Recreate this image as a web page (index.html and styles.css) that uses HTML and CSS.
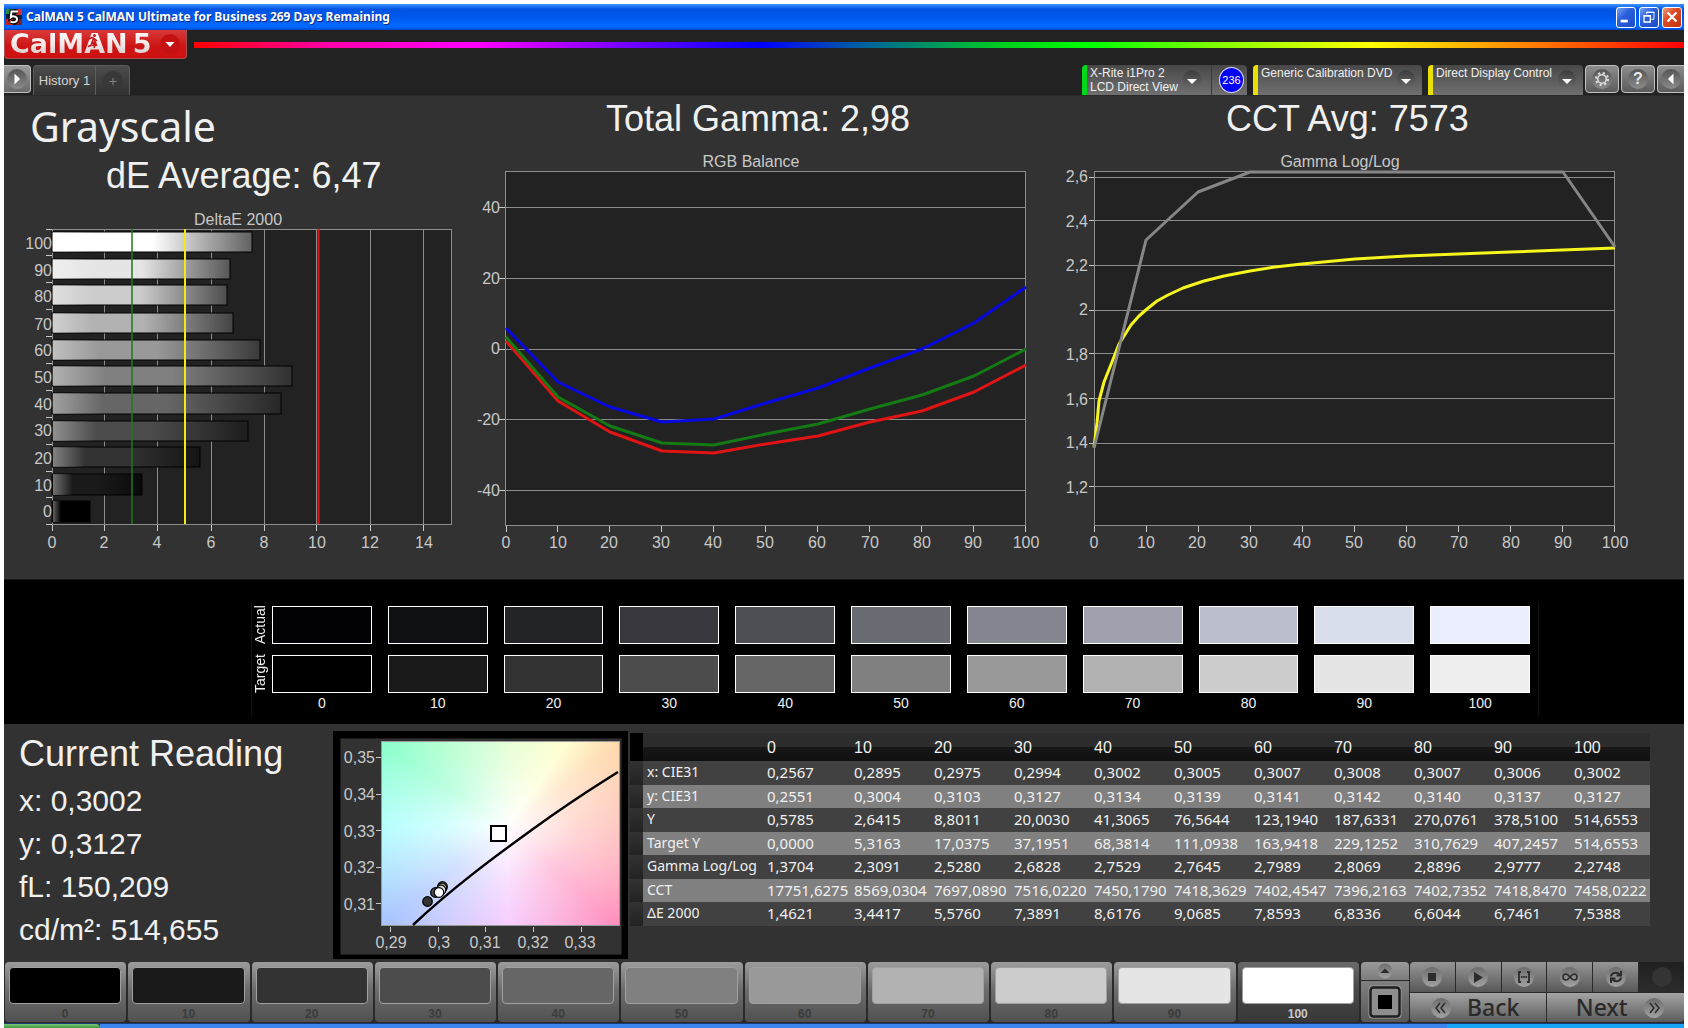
FILE: index.html
```html
<!DOCTYPE html>
<html lang="en">
<head>
<meta charset="utf-8">
<title>CalMAN 5</title>
<link rel="stylesheet" href="styles.css">
</head>
<body>
<div class="window">
  <header class="titlebar">
    <svg class="app-icon" viewBox="0 0 16 16" aria-hidden="true">
      <rect width="16" height="16" fill="#123"/><rect width="8" height="5" fill="#2a8a3a"/><rect x="10" width="6" height="6" fill="#c33"/><rect y="10" width="7" height="6" fill="#c22"/><rect x="10" y="10" width="6" height="6" fill="#722"/>
      <path d="M12 2.500H5.500L4.800 8.200C6.500 6.800 11 7 11 10.200 11 13.400 6.800 14 4.500 12.500" fill="none" stroke="#000" stroke-width="4"/>
      <path d="M12 2.500H5.500L4.800 8.200C6.500 6.800 11 7 11 10.200 11 13.400 6.800 14 4.500 12.500" fill="none" stroke="#fff" stroke-width="2"/>
    </svg>
    <h1 class="titlebar-text">CalMAN 5 CalMAN Ultimate for Business 269 Days Remaining</h1>
    <div class="window-buttons">
      <button class="win-btn" aria-label="Minimize"><svg viewBox="0 0 20 20"><rect x="4" y="13" width="8" height="3" fill="#fff"/></svg></button>
      <button class="win-btn" aria-label="Restore"><svg viewBox="0 0 20 20" fill="none" stroke="#fff"><path d="M7.500 7V4.500H15.500V12.500H12.500M7 5H16"/><path d="M4.500 8.500H11.500V15.500H4.500zM4 9H12" stroke-width="1.500"/></svg></button>
      <button class="win-btn win-close" aria-label="Close"><svg viewBox="0 0 20 20"><path d="M5 5L15 15M15 5L5 15" stroke="#fff" stroke-width="2.400"/></svg></button>
    </div>
  </header>

  <div class="toolbar">
    <div class="brand-row">
      <button class="brand" aria-label="CalMAN 5 menu">
        <span class="brand-name">CalMAN</span><span class="brand-name brand-five">5</span>
        <svg class="brand-runner" viewBox="0 0 12 16" fill="none" stroke="#c01a1a" stroke-width="1.600"><circle cx="7.500" cy="2.500" r="1.500" fill="#c01a1a" stroke="none"/><path d="M2 6L5 4.500L7.500 6L10 8M6.500 5.500L5 9.500L8 11.500L7 15M5 9.500L4 12.500L1 13.500"/></svg>
        <svg class="disc" viewBox="0 0 20 20"><circle cx="10" cy="10" r="10" fill="#c41212"/><path d="M5.500 8H14.500L10 13z" fill="#fff"/></svg>
      </button>
      <div class="spectrum"></div>
    </div>
    <div class="tab-row">
      <button class="side-btn side-left" aria-label="Expand panel"><svg class="disc" viewBox="0 0 20 20"><circle cx="10" cy="10" r="10" fill="url(#discFill)"/><path d="M7.500 4.500L13 10L7.500 15.500z" fill="#fff"/></svg></button>
      <nav class="tabs">
        <button class="tab">History 1</button>
        <button class="tab tab-add" aria-label="Add tab"><svg class="disc" viewBox="0 0 20 20"><circle cx="10" cy="10" r="10" fill="#383838"/><path d="M6.500 10.500H13.500M10 7V14" stroke="#858585" stroke-width="1"/></svg></button>
      </nav>
      <div class="devices">
        <div class="device device-meter">
          <button class="device-main">X-Rite i1Pro 2<br>LCD Direct View</button>
          <svg class="device-arrow" viewBox="0 0 18 20"><ellipse cx="9" cy="10" rx="9" ry="10" fill="url(#discDark)"/><path d="M4 9H14L9 14z" fill="#fff"/></svg>
          <button class="meter-count">236</button>
        </div>
        <div class="device device-source">
          <select class="device-main" aria-label="Pattern source"><option>Generic Calibration DVD</option></select>
          <svg class="device-arrow" viewBox="0 0 18 20"><ellipse cx="9" cy="10" rx="9" ry="10" fill="url(#discDark)"/><path d="M4 9H14L9 14z" fill="#fff"/></svg>
        </div>
        <div class="device device-display">
          <select class="device-main" aria-label="Display control"><option>Direct Display Control</option></select>
          <svg class="device-arrow" viewBox="0 0 18 20"><ellipse cx="9" cy="10" rx="9" ry="10" fill="url(#discDark)"/><path d="M4 9H14L9 14z" fill="#fff"/></svg>
        </div>
        <button class="side-btn" aria-label="Settings"><svg class="disc" viewBox="0 0 20 20"><circle cx="10" cy="10" r="10" fill="url(#discFill)"/><circle cx="10" cy="10" r="4.300" fill="none" stroke="#ddd" stroke-width="1.600"/><circle cx="10" cy="10" r="6" fill="none" stroke="#ddd" stroke-width="2" stroke-dasharray="2.200 2.512"/></svg></button>
        <button class="side-btn" aria-label="Help"><span class="help-mark">?</span></button>
        <button class="side-btn side-right" aria-label="Collapse panel"><svg class="disc" viewBox="0 0 20 20"><circle cx="10" cy="10" r="10" fill="url(#discFill)"/><path d="M12.500 4.500L7 10L12.500 15.500z" fill="#fff"/></svg></button>
      </div>
    </div>
  </div>

  <main>
    <section class="charts">
      <div class="chart-col">
        <h2 class="page-title">Grayscale</h2>
        <p class="stat-de">dE Average: 6,47</p>
        <svg class="chart" viewBox="0 0 466 383" role="img" aria-label="DeltaE 2000">
          <defs>
            <linearGradient id="discFill" x2="0" y2="1"><stop stop-color="#555"/><stop offset="1" stop-color="#8c8c8c"/></linearGradient>
            <linearGradient id="discDark" x2="0" y2="1"><stop stop-color="#3c3c3c"/><stop offset="1" stop-color="#6c6c6c"/></linearGradient>
            <linearGradient id="discLight" x2="0" y2="1"><stop stop-color="#6c6c6c"/><stop offset="1" stop-color="#a2a2a2"/></linearGradient>
            <linearGradient id="sheen"><stop stop-color="#fff" stop-opacity=".38"/><stop offset=".22" stop-color="#fff" stop-opacity="0"/><stop offset=".5" stop-color="#000" stop-opacity="0"/><stop offset="1" stop-color="#000" stop-opacity=".62"/></linearGradient>
          </defs>
          <text class="ctitle" x="234" y="29">DeltaE 2000</text>
          <rect class="plot" x="48.500" y="33.500" width="399" height="295"/>
          <path class="grid" d="M100.500 34V328M153.500 34V328M207.500 34V328M260.500 34V328M312.500 34V328M366.500 34V328M419.500 34V328"/>
          <path class="tick" d="M42 33.500h6M42 59.500h6M42 86.500h6M42 113.500h6M42 140.500h6M42 167.500h6M42 194.500h6M42 221.500h6M42 248.500h6M42 275.500h6M42 301.500h6M42 328.500h6M48.500 329v6M100.500 329v6M153.500 329v6M207.500 329v6M260.500 329v6M312.500 329v6M366.500 329v6M419.500 329v6"/>
          <g class="bars">
            <rect x="48" y="36" width="200" height="20" fill="#fff"/><rect x="48" y="63" width="178" height="20" fill="#e5e5e5"/><rect x="48" y="89" width="175" height="20" fill="#ccc"/><rect x="48" y="117" width="181" height="20" fill="#b2b2b2"/><rect x="48" y="144" width="208" height="20" fill="#999"/><rect x="48" y="170" width="240" height="20" fill="#808080"/><rect x="48" y="197" width="229" height="21" fill="#666"/><rect x="48" y="225" width="196" height="20" fill="#4c4c4c"/><rect x="48" y="251" width="148" height="20" fill="#333"/><rect x="48" y="278" width="90" height="21" fill="#1a1a1a"/><rect x="48" y="305" width="38" height="21" fill="#000"/>
          </g>
          <g fill="url(#sheen)">
            <rect x="49" y="36" width="199" height="20"/><rect x="49" y="63" width="177" height="20"/><rect x="49" y="89" width="174" height="20"/><rect x="49" y="117" width="180" height="20"/><rect x="49" y="144" width="207" height="20"/><rect x="49" y="170" width="239" height="20"/><rect x="49" y="197" width="228" height="21"/><rect x="49" y="225" width="195" height="20"/><rect x="49" y="251" width="147" height="20"/><rect x="49" y="278" width="89" height="21"/><rect x="49" y="305" width="37" height="21"/>
          </g>
          <path d="M128 33V328" stroke="#1a7a20" stroke-width="2" opacity=".75"/>
          <path d="M181 33V328" stroke="#f0e818" stroke-width="2"/>
          <path d="M314.500 33V328" stroke="#d81818" stroke-width="2"/>
          <g class="ylab"><text x="48" y="53">100</text><text x="48" y="80">90</text><text x="48" y="106">80</text><text x="48" y="134">70</text><text x="48" y="160">60</text><text x="48" y="187">50</text><text x="48" y="214">40</text><text x="48" y="240">30</text><text x="48" y="268">20</text><text x="48" y="295">10</text><text x="48" y="321">0</text></g>
          <g class="xlab"><text x="48" y="352">0</text><text x="100" y="352">2</text><text x="153" y="352">4</text><text x="207" y="352">6</text><text x="260" y="352">8</text><text x="313" y="352">10</text><text x="366" y="352">12</text><text x="420" y="352">14</text></g>
        </svg>
      </div>
      <div class="chart-col">
        <p class="stat stat-gamma">Total Gamma: 2,98</p>
        <svg class="chart" viewBox="0 0 585 441" role="img" aria-label="RGB Balance">
          <text class="ctitle" x="281" y="29">RGB Balance</text>
          <rect class="plot" x="35.500" y="33.500" width="520" height="354"/>
          <path class="grid" d="M36 69.500H556M36 140.500H556M36 211.500H556M36 281.500H556M36 352.500H556"/>
          <path class="tick" d="M29 69.500h6M29 140.500h6M29 211.500h6M29 281.500h6M29 352.500h6M36.500 388v6M87.500 388v6M139.500 388v6M191.500 388v6M243.500 388v6M295.500 388v6M347.500 388v6M399.500 388v6M451.500 388v6M503.500 388v6M555.500 388v6"/>
          <polyline class="line" stroke="#e01414" points="36,203 88,263 140,294 192,313 244,315 296,306 348,298 400,284 452,273 504,254 556,227"/>
          <polyline class="line" stroke="#147a14" points="36,199 88,259 140,288 192,305 244,307 296,296 348,286 400,271 452,257 504,238 556,211"/>
          <polyline class="line" stroke="#0808e0" points="36,190 88,244 140,269 192,284 244,281 296,265 348,250 400,230 452,211 504,185 556,149"/>
          <g class="ylab"><text x="30" y="75">40</text><text x="30" y="146">20</text><text x="30" y="216">0</text><text x="30" y="287">-20</text><text x="30" y="358">-40</text></g>
          <g class="xlab"><text x="36" y="410">0</text><text x="88" y="410">10</text><text x="139" y="410">20</text><text x="191" y="410">30</text><text x="243" y="410">40</text><text x="295" y="410">50</text><text x="347" y="410">60</text><text x="400" y="410">70</text><text x="452" y="410">80</text><text x="503" y="410">90</text><text x="556" y="410">100</text></g>
        </svg>
      </div>
      <div class="chart-col">
        <p class="stat stat-cct">CCT Avg: 7573</p>
        <svg class="chart" viewBox="0 0 629 441" role="img" aria-label="Gamma Log/Log">
          <text class="ctitle" x="285" y="29">Gamma Log/Log</text>
          <rect class="plot" x="39.500" y="33.500" width="520" height="354"/>
          <path class="grid" d="M40 39.500H560M40 82.500H560M40 127.500H560M40 172.500H560M40 215.500H560M40 260.500H560M40 305.500H560M40 348.500H560"/>
          <path class="tick" d="M34 39.500h5M34 82.500h5M34 127.500h5M34 172.500h5M34 215.500h5M34 260.500h5M34 305.500h5M34 348.500h5M39.500 388v6M91.500 388v6M143.500 388v6M195.500 388v6M247.500 388v6M299.500 388v6M351.500 388v6M403.500 388v6M455.500 388v6M507.500 388v6M559.500 388v6"/>
          <polyline class="line" stroke="#f6f61e" points="39,309 42,285 44,263 49,244 57,224 64,206 76,187 84,178 92,171 102,163 113,157 128,150 149,143 169,138 195,133 220,129 247,126 300,121 351,118 403,116 455,114 507,112 560,110"/>
          <polyline class="line" stroke="#868686" points="39,310 91,102 143,54 195,34 508,34 560,109"/>
          <g class="ylab"><text x="33" y="44">2,6</text><text x="33" y="89">2,4</text><text x="33" y="133">2,2</text><text x="33" y="177">2</text><text x="33" y="222">1,8</text><text x="33" y="267">1,6</text><text x="33" y="310">1,4</text><text x="33" y="355">1,2</text></g>
          <g class="xlab"><text x="39" y="410">0</text><text x="91" y="410">10</text><text x="142" y="410">20</text><text x="194" y="410">30</text><text x="247" y="410">40</text><text x="299" y="410">50</text><text x="352" y="410">60</text><text x="404" y="410">70</text><text x="456" y="410">80</text><text x="508" y="410">90</text><text x="560" y="410">100</text></g>
        </svg>
      </div>
    </section>

    <section class="strip">
      <div class="strip-inner">
        <div class="strip-row">
          <span class="strip-label">Actual</span>
          <div class="swatches">
            <i class="swatch a0"></i><i class="swatch a10"></i><i class="swatch a20"></i><i class="swatch a30"></i><i class="swatch a40"></i><i class="swatch a50"></i><i class="swatch a60"></i><i class="swatch a70"></i><i class="swatch a80"></i><i class="swatch a90"></i><i class="swatch a100"></i>
          </div>
        </div>
        <div class="strip-row">
          <span class="strip-label">Target</span>
          <div class="swatches">
            <i class="swatch t0"></i><i class="swatch t10"></i><i class="swatch t20"></i><i class="swatch t30"></i><i class="swatch t40"></i><i class="swatch t50"></i><i class="swatch t60"></i><i class="swatch t70"></i><i class="swatch t80"></i><i class="swatch t90"></i><i class="swatch t100"></i>
          </div>
        </div>
        <div class="strip-numbers swatches">
          <span>0</span><span>10</span><span>20</span><span>30</span><span>40</span><span>50</span><span>60</span><span>70</span><span>80</span><span>90</span><span>100</span>
        </div>
      </div>
    </section>

    <section class="lower">
      <div class="reading">
        <h2 class="reading-title">Current Reading</h2>
        <p>x: 0,3002</p>
        <p>y: 0,3127</p>
        <p>fL: 150,209</p>
        <p>cd/m²: 514,655</p>
      </div>
      <svg class="cie" viewBox="0 0 295 228" role="img" aria-label="CIE chromaticity">
        <rect width="295" height="228" fill="#000"/>
        <rect x="7.500" y="7.500" width="281" height="216" fill="#323232" stroke="#1c1c1c"/>
        <foreignObject x="49" y="11" width="237" height="184"><div class="gamut"></div></foreignObject>
        <rect x="48.500" y="10.500" width="238" height="184" fill="none" stroke="#9a9a9a"/>
        <path d="M80 194C118 158 160 127 200 98S255 60 285 41" fill="none" stroke="#000" stroke-width="2.500"/>
        <rect x="158" y="95" width="15" height="15" fill="#fff" stroke="#000" stroke-width="2"/>
        <g stroke="#000" stroke-width="1.200">
          <circle cx="94.500" cy="170.500" r="4.800" fill="#333"/><circle cx="102.500" cy="161.500" r="4.800" fill="#4c4c4c"/><circle cx="109.500" cy="155.500" r="4.800" fill="#888"/><circle cx="109" cy="157" r="4.800" fill="#b2b2b2"/><circle cx="108" cy="159" r="4.800" fill="#ddd"/><circle cx="106" cy="161.500" r="4.800" fill="#fff"/>
        </g>
        <path class="tick" d="M43 26.500h5M43 63.500h5M43 99.500h5M43 136.500h5M43 172.500h5M57.500 196v5M105.500 196v5M152.500 196v5M200.500 196v5M248.500 196v5"/>
        <g class="ylab"><text x="42" y="32">0,35</text><text x="42" y="69">0,34</text><text x="42" y="106">0,33</text><text x="42" y="142">0,32</text><text x="42" y="179">0,31</text></g>
        <g class="xlab"><text x="58" y="217">0,29</text><text x="106" y="217">0,3</text><text x="152" y="217">0,31</text><text x="200" y="217">0,32</text><text x="247" y="217">0,33</text></g>
      </svg>
      <div class="table-wrap">
        <table class="data">
          <colgroup><col class="c-side"><col class="c-name"><col class="c-first"><col span="10" class="c-val"></colgroup>
          <thead><tr><td class="side"></td><td></td><th scope="col">0</th><th scope="col">10</th><th scope="col">20</th><th scope="col">30</th><th scope="col">40</th><th scope="col">50</th><th scope="col">60</th><th scope="col">70</th><th scope="col">80</th><th scope="col">90</th><th scope="col">100</th></tr></thead>
          <tbody>
            <tr><td class="side"></td><th scope="row">x: CIE31</th><td>0,2567</td><td>0,2895</td><td>0,2975</td><td>0,2994</td><td>0,3002</td><td>0,3005</td><td>0,3007</td><td>0,3008</td><td>0,3007</td><td>0,3006</td><td>0,3002</td></tr>
            <tr><td class="side"></td><th scope="row">y: CIE31</th><td>0,2551</td><td>0,3004</td><td>0,3103</td><td>0,3127</td><td>0,3134</td><td>0,3139</td><td>0,3141</td><td>0,3142</td><td>0,3140</td><td>0,3137</td><td>0,3127</td></tr>
            <tr><td class="side"></td><th scope="row">Y</th><td>0,5785</td><td>2,6415</td><td>8,8011</td><td>20,0030</td><td>41,3065</td><td>76,5644</td><td>123,1940</td><td>187,6331</td><td>270,0761</td><td>378,5100</td><td>514,6553</td></tr>
            <tr><td class="side"></td><th scope="row">Target Y</th><td>0,0000</td><td>5,3163</td><td>17,0375</td><td>37,1951</td><td>68,3814</td><td>111,0938</td><td>163,9418</td><td>229,1252</td><td>310,7629</td><td>407,2457</td><td>514,6553</td></tr>
            <tr><td class="side"></td><th scope="row">Gamma Log/Log</th><td>1,3704</td><td>2,3091</td><td>2,5280</td><td>2,6828</td><td>2,7529</td><td>2,7645</td><td>2,7989</td><td>2,8069</td><td>2,8896</td><td>2,9777</td><td>2,2748</td></tr>
            <tr><td class="side"></td><th scope="row">CCT</th><td>17751,6275</td><td>8569,0304</td><td>7697,0890</td><td>7516,0220</td><td>7450,1790</td><td>7418,3629</td><td>7402,4547</td><td>7396,2163</td><td>7402,7352</td><td>7418,8470</td><td>7458,0222</td></tr>
            <tr><td class="side"></td><th scope="row">ΔE 2000</th><td>1,4621</td><td>3,4417</td><td>5,5760</td><td>7,3891</td><td>8,6176</td><td>9,0685</td><td>7,8593</td><td>6,8336</td><td>6,6044</td><td>6,7461</td><td>7,5388</td></tr>
          </tbody>
        </table>
      </div>
    </section>
  </main>

  <footer class="controls">
    <div class="steps">
      <button class="step"><i class="t0"></i>0</button><button class="step"><i class="t10"></i>10</button><button class="step"><i class="t20"></i>20</button><button class="step"><i class="t30"></i>30</button><button class="step"><i class="t40"></i>40</button><button class="step"><i class="t50"></i>50</button><button class="step"><i class="t60"></i>60</button><button class="step"><i class="t70"></i>70</button><button class="step"><i class="t80"></i>80</button><button class="step"><i class="t90"></i>90</button><button class="step step-on"><i class="white"></i>100</button>
    </div>
    <div class="pattern">
      <button class="pattern-up" aria-label="Pattern menu"><svg viewBox="0 0 16 16"><circle cx="8" cy="8" r="7.500" fill="url(#discLight)"/><path d="M3.500 10L8 5.500L12.500 10z" fill="#2c2c2c"/></svg></button>
      <button class="pattern-window" aria-label="Pattern window"><svg viewBox="0 0 34 34"><rect x="1" y="1" width="32" height="32" rx="3" fill="#777" stroke="#9a9a9a"/><rect x="2.500" y="2.500" width="29" height="29" rx="3" fill="#8e8e8e" stroke="#202020" stroke-width="2.500"/><rect x="10" y="10" width="14" height="14" fill="#000"/></svg></button>
    </div>
    <div class="transport">
      <button class="t-btn" aria-label="Stop"><svg viewBox="0 0 20 20"><circle cx="10" cy="10" r="10" fill="url(#discLight)"/><rect x="6" y="6" width="8" height="8" fill="#2c2c2c"/></svg></button>
      <button class="t-btn" aria-label="Play"><svg viewBox="0 0 20 20"><circle cx="10" cy="10" r="10" fill="url(#discLight)"/><path d="M6 5L15 10.500L6 16z" fill="#2c2c2c"/></svg></button>
      <button class="t-btn" aria-label="Read series"><svg viewBox="0 0 20 20" fill="none" stroke="#2c2c2c" stroke-width="1.800"><circle cx="10" cy="10" r="10" fill="url(#discLight)" stroke="none"/><path d="M7 5H5V15H7M13 5H15V15H13M7 10h1.500M9.200 10h1.500M11.500 10h1.500"/></svg></button>
      <button class="t-btn" aria-label="Read continuous"><svg viewBox="0 0 20 20" fill="none" stroke="#2c2c2c" stroke-width="1.600"><circle cx="10" cy="10" r="10" fill="url(#discLight)" stroke="none"/><path d="M10 10C8 7.500 7 7 6 7A3 3 0 0 0 6 13C7 13 8 12.500 10 10S13 7 14 7A3 3 0 0 1 14 13C13 13 12 12.500 10 10z"/></svg></button>
      <button class="t-btn" aria-label="Repeat"><svg viewBox="0 0 20 20" fill="none" stroke="#2c2c2c" stroke-width="2"><circle cx="10" cy="10" r="10" fill="url(#discLight)" stroke="none"/><path d="M5 9.500C5.500 5.500 11 4.500 13.500 7.500M15 10.500C14.500 14.500 9 15.500 6.500 12.500M15 4V8.500H10.500M5 16V11.500H9.500"/></svg></button>
      <button class="t-btn t-off" aria-label="Record"><svg viewBox="0 0 20 20"><circle cx="10" cy="10" r="10" fill="#343434"/></svg></button>
      <button class="nav-btn"><svg viewBox="0 0 20 20" fill="none" stroke="#2c2c2c" stroke-width="1.500"><circle cx="10" cy="10" r="10" fill="url(#discLight)" stroke="none"/><path d="M9 5L5 10L9 15M14 5L10 10L14 15"/></svg>Back</button>
      <button class="nav-btn">Next<svg viewBox="0 0 20 20" fill="none" stroke="#2c2c2c" stroke-width="1.500"><circle cx="10" cy="10" r="10" fill="url(#discLight)" stroke="none"/><path d="M6 5L10 10L6 15M11 5L15 10L11 15"/></svg></button>
    </div>
  </footer>
  <div class="taskbar"><i class="start"></i><i class="tasks"></i><i class="tray"></i></div>
</div>
</body>
</html>
```
FILE: styles.css
```css
* { box-sizing: border-box; }
body { margin: 0; background: #fff; font-family: "Liberation Sans", Arial, sans-serif; color: #f0f0f0; }
h1, h2, p { margin: 0; font-weight: 400; }
button, select { margin: 0; padding: 0; border: 0; background: none; color: inherit; font: inherit; }
svg { display: block; }
.window { margin: 4px 4px 0; background: #323232; }

/* title bar */
.titlebar { display: flex; align-items: center; height: 26px; padding: 0 2px; background: linear-gradient(#3d95ff, #0054e3 20%, #0058ee 50%, #0068ff 80%, #0066fa 92%, #003ec0); }
.app-icon { width: 16px; height: 16px; }
.titlebar-text { flex: 1; padding-left: 4px; font: 700 12px/20px "Noto Sans", sans-serif; color: #fff; text-shadow: 1px 1px 0 #0a2a80; }
.window-buttons { display: flex; gap: 3px; }
.win-btn { width: 20px; height: 21px; border: 1px solid #fff; border-radius: 3px; background: linear-gradient(135deg, #7aa4f4, #2a5fdc 40%, #1c4cc8); }
.win-close { background: linear-gradient(135deg, #f0a080, #dc4a24 40%, #c03410); }

/* toolbar */
.toolbar { background: #222; padding-bottom: 1px; }
.brand-row { display: flex; align-items: flex-start; height: 35px; gap: 7px; }
.brand { position: relative; display: flex; align-items: center; width: 183px; height: 29px; padding: 0 7px 0 5px; border: 1px solid #a85050; border-top: 0; border-radius: 0 0 4px 4px; background: linear-gradient(#d83a3a, #cc1414 60%, #d01010); }
.brand-name { font: 700 27px/32px "DejaVu Sans", sans-serif; background: linear-gradient(#fff, #f4e8e8 50%, #c8c0c0); -webkit-background-clip: text; background-clip: text; color: transparent; }
.brand-five { padding: 0 9px 0 5px; }
.brand-runner { position: absolute; left: 82px; top: 3px; width: 12px; height: 16px; }
.disc { width: 20px; height: 20px; flex: none; }
.spectrum { flex: 1; height: 6px; margin-top: 12px; background: linear-gradient(90deg, #f00 0, #f0a 9%, #f0f 19%, #60f 30%, #00f 38%, #05a 44%, #0c2 54%, #0f0 60%, #8f0 69%, #ff0 79%, #f80 89%, #f00 100%); }
.tab-row { display: flex; height: 30px; }
.side-btn { display: grid; place-items: center; width: 34px; height: 28px; border: 1px solid #c0c0c0; border-radius: 4px; background: linear-gradient(#8c8c8c, #5c5c5c); }
.side-left { width: 27px; border-left: 0; border-radius: 0 4px 4px 0; background: linear-gradient(#9a9a9a, #6c6c6c); }
.side-right { width: 27px; border-right: 0; border-radius: 4px 0 0 4px; }
.tabs { display: flex; margin-left: 2px; border: 1px solid #5c5c5c; border-bottom: 0; border-radius: 4px 4px 0 0; background: linear-gradient(#4c4c4c, #323232); }
.tab { width: 61px; font-size: 13px; color: #d4d4d4; white-space: nowrap; }
.tab-add { display: grid; place-items: center; width: 34px; border-left: 1px solid #5c5c5c; }
.devices { display: flex; gap: 2px; margin-left: auto; }
.device { position: relative; display: flex; margin-right: 4px; border-left: 5px solid #e8e000; border-radius: 4px 4px 0 0; background: linear-gradient(#484848, #707070); }
.device-main { appearance: none; display: block; flex: 1; padding: 0 0 0 3px; font-size: 12px; line-height: 14px; text-align: left; white-space: nowrap; color: #f0f0f0; }
select.device-main { padding-bottom: 15px; }
.device-arrow { position: absolute; right: 7px; top: 5px; width: 18px; height: 20px; pointer-events: none; }
.device-meter { width: 165px; border-left-color: #00d818; }
.device-meter .device-arrow { right: 46px; }
.device-source { width: 169px; }
.device-display { width: 155px; margin-right: 0; }
.meter-count { width: 25px; height: 26px; margin: 2px 3px 0 0; border: 1px solid #e0e0ff; border-radius: 50%; background: #0000f4; font-size: 11px; color: #fff; }
.device-meter .device-main { border-right: 1px solid #3a3a3a; margin-right: 7px; }
.help-mark { width: 20px; height: 20px; border-radius: 50%; background: linear-gradient(#555, #8c8c8c); font: 700 16px/20px "Liberation Sans", sans-serif; color: #e8e8e8; text-align: center; }

/* charts */
.charts { display: grid; grid-template-columns: 466fr 585fr 629fr; border-top: 1px solid #2a2a2a; margin-top: -1px; padding-top: 1px; }
.page-title { padding: 1px 0 2px 26px; font: 400 41px/56px "Noto Sans", sans-serif; }
.stat, .stat-de { font-size: 36px; line-height: 40px; white-space: nowrap; }
.stat-de { padding-left: 102px; }
.stat { padding-top: 2px; margin-bottom: -1px; }
.stat-gamma { padding-left: 136px; }
.stat-cct { padding-left: 171px; }
.chart { width: 100%; height: auto; }
.plot { fill: #222; stroke: #8e8e8e; }
.grid { stroke: #8c8c8c; fill: none; }
.tick { stroke: #c8c8c8; fill: none; }
.line { fill: none; stroke-width: 3; stroke-linejoin: round; }
.bars rect { stroke: #000; }
.ctitle, .ylab, .xlab { font-size: 16px; fill: #c8c8c8; }
.ctitle, .xlab { text-anchor: middle; }
.ylab { text-anchor: end; }

/* swatch strip */
.strip { padding: 22px 145px 8px 247px; border-top: 1px solid #181818; background: #000; }
.strip-inner { padding: 4px 8px 5px 0; border: solid #141414; border-width: 0 1px; }
.strip-row { display: flex; height: 38px; margin-bottom: 11px; }
.strip-row + .strip-row { margin-bottom: 2px; }
.strip-label { width: 20px; line-height: 16px; font-size: 14px; writing-mode: vertical-rl; transform: rotate(180deg); padding-left: 5px; text-align: center; white-space: nowrap; }
.swatches { flex: 1; display: grid; grid-template-columns: repeat(11, 1fr); column-gap: 16px; }
.swatch { border: 1px solid #fff; }
.strip-numbers { margin-left: 20px; font-size: 14px; line-height: 16px; text-align: center; }
.a0 { background: #020206; } .a10 { background: #0f1014; } .a20 { background: #232428; } .a30 { background: #37373d; } .a40 { background: #4e4f55; }
.a50 { background: #696b73; } .a60 { background: #83858f; } .a70 { background: #9fa2ae; } .a80 { background: #bbbfcd; } .a90 { background: #d9deed; } .a100 { background: #ebeeff; }
.t0 { background: #000; } .t10 { background: #1a1a1a; } .t20 { background: #333; } .t30 { background: #4c4c4c; } .t40 { background: #666; }
.t50 { background: #808080; } .t60 { background: #999; } .t70 { background: #b2b2b2; } .t80 { background: #ccc; } .t90 { background: #e5e5e5; } .t100 { background: #eee; }
.white { background: #fff; }

/* readings */
.lower { display: grid; grid-template-columns: 329fr 295fr 1056fr; align-items: start; padding: 7px 0 3px; }
.reading { padding: 2px 0 0 15px; font-size: 30px; line-height: 43px; white-space: nowrap; }
.reading-title { font-size: 36px; line-height: 42px; padding-bottom: 4px; }
.cie { width: 100%; height: auto; }
.gamut { height: 184px; background: radial-gradient(ellipse 70% 75% at 53% 46%, #fff, rgba(255, 255, 255, 0.5) 40%, rgba(255, 255, 255, 0)), conic-gradient(from 0deg at 53% 46%, #d8ffc4, #ffffc0 35deg, #ffd6a4 53deg, #ffb4ac 90deg, #ff8cbc 132deg, #f4beff 180deg, #a8c4ff 232deg, #a4ffff 270deg, #86ffc8 304deg, #d8ffc4); }
.table-wrap { padding: 2px 34px 0 2px; }
.data { width: 100%; table-layout: fixed; border-collapse: collapse; font: 400 15px/20px "Noto Sans", sans-serif; white-space: nowrap; }
.c-side { width: 13px; } .c-name { width: 120px; } .c-first { width: 87px; } .c-val { width: 80px; }
.data td, .data th { padding: 0 0 2px 4px; text-align: left; font-weight: 400; }
.data tbody th { font-size: 14px; }
.data thead th { padding: 2px 0 0 4px; font: 400 16px/26px "Liberation Sans", sans-serif; }
.data thead tr { height: 28px; background: linear-gradient(#2c2c2c 50%, #181818 50%, #101010); }
.data thead .side { background: #000; }
.data tbody tr { height: 24px; background: #414141; }
.data tbody tr:nth-child(even) { height: 23px; background: #808080; }
.data tbody .side { background: linear-gradient(#323232, #222); }

/* bottom controls */
.controls { display: flex; height: 61px; background: #2a2a2a; color: #2e2e2e; }
.steps { flex: 1; display: flex; }
.step { flex: 1; display: flex; flex-direction: column; align-items: stretch; margin: 0 1px; padding: 5px 5px 0 4px; height: 60px; border-radius: 4px; background: linear-gradient(#9c9c9c, #6e6e6e 45%, #505050); font: 700 12px/18px "Liberation Sans", sans-serif; color: #3c3c3c; }
.step i { flex: none; height: 37px; margin-bottom: 1px; border: 1px solid #a0a0a0; border-radius: 4px; }
.step-on { background: linear-gradient(#6a6a6a, #484848 45%, #383838); color: #c8c8c8; }
.pattern { width: 50px; padding: 0 1px; display: flex; flex-direction: column; gap: 1px; }
.pattern button { display: grid; place-items: center; background: linear-gradient(#9a9a9a, #7c7c7c); }
.pattern-up { height: 18px; border-radius: 4px 4px 0 0; }
.pattern-up svg { width: 16px; height: 16px; }
.pattern .pattern-window { height: 41px; border-radius: 0 0 4px 4px; background: linear-gradient(#808080, #585858); }
.pattern-window svg { width: 34px; height: 34px; }
.transport { display: grid; grid-template: 30px 29px / repeat(6, 1fr); gap: 1px; width: 274px; height: 60px; border-radius: 4px; overflow: hidden; }
.t-btn { display: grid; place-items: center; background: linear-gradient(#969696, #585858); }
.t-off { background: linear-gradient(#202020, #2c2c2c); }
.transport svg { width: 20px; height: 20px; }
.nav-btn { grid-column: span 3; display: flex; align-items: center; justify-content: center; gap: 16px; padding-right: 6px; background: linear-gradient(#a4a4a4, #5c5c5c); font: 500 23px/29px "Noto Sans", sans-serif; color: #2a2a2a; }
.nav-btn:last-child { padding: 0 0 0 8px; }

/* task bar edge */
.taskbar { display: flex; height: 5px; border-top: 1px solid #1c3c78; }
.start { width: 96px; background: linear-gradient(#7cc47c, #3c9a3c); border-radius: 0 4px 0 0; }
.tasks { flex: 1; background: #3b84ec; }
.tray { width: 237px; background: #18a4f6; }
```
